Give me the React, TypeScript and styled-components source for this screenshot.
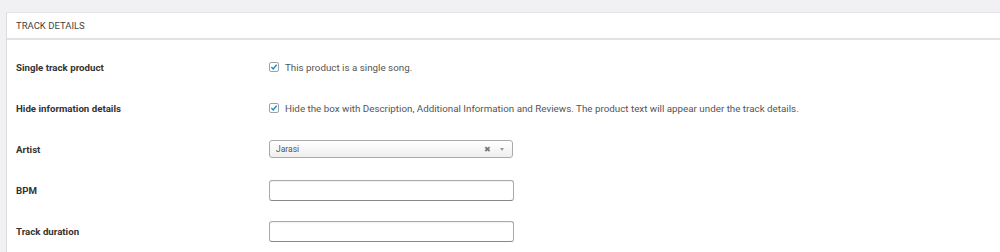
import React from "react";
import styled, { createGlobalStyle } from "styled-components";

const GlobalStyle = createGlobalStyle`
  html, body {
    margin: 0;
    padding: 0;
    background: #f1f1f3;
    font-family: Roboto, "Liberation Sans", sans-serif;
  }
`;

interface RowProps {
  label: string;
  children: React.ReactNode;
}

const CheckIcon = () => (
  <svg width="10" height="10" viewBox="0 0 10 10">
    <rect x="0.5" y="0.5" width="9" height="9" rx="1.5" fill="#fff" stroke="#9aa4ad" />
    <path d="M2.4 5.1 L4.2 7 L7.6 2.8" fill="none" stroke="#1e8cbe" strokeWidth="1.4" />
  </svg>
);

const Row: React.FC<RowProps> = ({ label, children }) => (
  <FieldRow>
    <Label>{label}</Label>
    <Field>{children}</Field>
  </FieldRow>
);

const App: React.FC = () => {
  return (
    <>
      <GlobalStyle />
      <Page>
        <Panel>
          <Header>TRACK DETAILS</Header>
          <Body>
            <Row label="Single track product">
              <CheckLine>
                <CheckIcon />
                <span>This product is a single song.</span>
              </CheckLine>
            </Row>
            <Row label="Hide information details">
              <CheckLine>
                <CheckIcon />
                <span>
                  Hide the box with Description, Additional Information and Reviews. The product
                  text will appear under the track details.
                </span>
              </CheckLine>
            </Row>
            <Row label="Artist">
              <Select>
                <span>Jarasi</span>
                <SelectIcons>
                  <Clear>✖</Clear>
                  <Arrow />
                </SelectIcons>
              </Select>
            </Row>
            <Row label="BPM">
              <TextInput />
            </Row>
            <Row label="Track duration">
              <TextInput />
            </Row>
          </Body>
        </Panel>
      </Page>
    </>
  );
};

export default App;

const Page = styled.div`
  padding: 12px 0 0 6px;
  height: 252px;
  box-sizing: border-box;
  overflow: hidden;
`;

const Panel = styled.div`
  background: #fff;
  border-left: 1px solid #dcdcde;
  border-top: 1px solid #e4e4e6;
  height: 100%;
`;

const Header = styled.div`
  height: 25px;
  display: flex;
  align-items: center;
  padding-left: 9px;
  font-size: 9.5px;
  color: #444;
  border-bottom: 2px solid #e2e2e4;
`;

const Body = styled.div`
  padding-top: 17px;
`;

const FieldRow = styled.div`
  display: flex;
  align-items: center;
  height: 20px;
  margin-bottom: 21px;
`;

const Label = styled.div`
  width: 253px;
  padding-left: 9px;
  font-size: 9.7px;
  font-weight: 700;
  color: #333;
`;

const Field = styled.div`
  display: flex;
  align-items: center;
`;

const CheckLine = styled.label`
  display: flex;
  align-items: center;
  gap: 6px;
  font-size: 9.8px;
  color: #555;
`;

const Select = styled.div`
  width: 244px;
  height: 18px;
  box-sizing: border-box;
  border: 1px solid #aaa;
  border-radius: 3px;
  background: linear-gradient(#fff, #eee);
  display: flex;
  align-items: center;
  justify-content: space-between;
  padding: 0 8px 0 6px;
  font-size: 8.5px;
  color: #555;
`;

const SelectIcons = styled.div`
  display: flex;
  align-items: center;
  gap: 9px;
`;

const Clear = styled.span`
  font-size: 8px;
  color: #777;
`;

const Arrow = styled.span`
  width: 0;
  height: 0;
  border-left: 2.5px solid transparent;
  border-right: 2.5px solid transparent;
  border-top: 3px solid #999;
`;

const TextInput = styled.input`
  width: 245px;
  height: 21px;
  box-sizing: border-box;
  border: 1px solid #aaa;
  border-bottom-color: #888;
  border-radius: 3px;
  box-shadow: inset 0 1px 1px rgba(0, 0, 0, 0.06);
  background: #fff;
  outline: none;
`;
